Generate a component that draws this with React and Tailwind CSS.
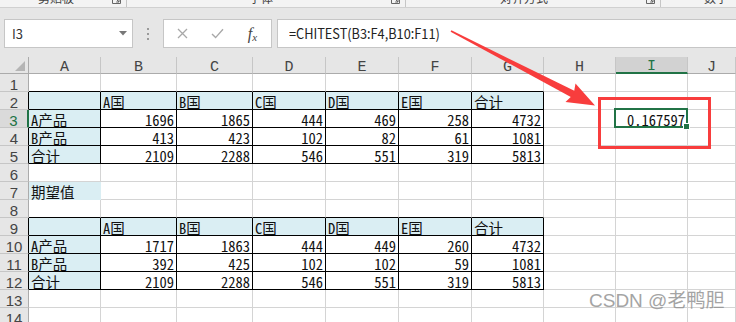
import React from 'react';

const CJK = "font-['Noto_Sans_CJK_SC',sans-serif]";
const CELLFONT = "font-['Noto_Sans_Mono_CJK_SC','Liberation_Mono','Noto_Sans_CJK_SC',monospace]";
const HEADFONT = "font-['Liberation_Mono',monospace]";
const ROWFONT = "font-['Liberation_Sans',sans-serif]";

const colLetters = ['A', 'B', 'C', 'D', 'E', 'F', 'G', 'H', 'I', 'J'];

const t1 = [
  [null, 'A国', 'B国', 'C国', 'D国', 'E国', '合计'],
  ['A产品', 1696, 1865, 444, 469, 258, 4732],
  ['B产品', 413, 423, 102, 82, 61, 1081],
  ['合计', 2109, 2288, 546, 551, 319, 5813],
];
const t2 = [
  [null, 'A国', 'B国', 'C国', 'D国', 'E国', '合计'],
  ['A产品', 1717, 1863, 444, 449, 260, 4732],
  ['B产品', 392, 425, 102, 102, 59, 1081],
  ['合计', 2109, 2288, 546, 551, 319, 5813],
];

function getValue(r, c) {
  if (r >= 2 && r <= 5 && c <= 6) return t1[r - 2][c];
  if (r >= 9 && r <= 12 && c <= 6) return t2[r - 9][c];
  if (r === 7 && c === 0) return '期望值';
  if (r === 3 && c === 8) return '0.167597';
  return null;
}
const inTable = (r, c) => c <= 6 && ((r >= 2 && r <= 5) || (r >= 9 && r <= 12));
const tableRow = (r) => (r >= 2 && r <= 5) || (r >= 9 && r <= 12);
const isFill = (r, c) => (inTable(r, c) && (r === 2 || r === 9 || c === 0)) || (r === 7 && c === 0);

function Launcher() {
  return (
    <svg className="ml-auto mr-[5px] -mt-[5px] shrink-0" width="9" height="9" viewBox="0 0 9 9">
      <path d="M0.5 3V8.5H8.5V3M3 3L7 7M7 4.2V7H4.2" fill="none" stroke="#666" strokeWidth="1" />
    </svg>
  );
}

function Ribbon() {
  const groups = [
    { w: 'w-[127px]', label: '剪贴板', ml: 'ml-[38px]' },
    { w: 'w-[279px]', label: '字体', ml: 'ml-[122px]' },
    { w: 'w-[255px]', label: '对齐方式', ml: 'ml-[94px]' },
    { w: 'flex-1', label: '数字', ml: 'ml-[43px]', last: true },
  ];
  return (
    <div className="flex h-[8px] bg-[#f3f3f3] border-b border-[#d0d0d0] overflow-hidden">
      {groups.map((g) => (
        <div key={g.label} className={`${g.w} flex h-full ${g.last ? '' : 'border-r border-[#c6c6c6]'}`}>
          <span className={`${g.ml} -mt-[8px] ${CJK} text-[12px] leading-[12px] text-[#444] whitespace-nowrap`}>{g.label}</span>
          {!g.last && <Launcher />}
        </div>
      ))}
    </div>
  );
}

function FormulaBar() {
  return (
    <div className="flex h-[49px] bg-[#e6e6e6] pt-[11px] pl-[4px]">
      <div className="flex items-center w-[129px] h-[29px] bg-white border border-[#c6c6c6] pl-[7px] pr-[5px]">
        <span className={`${CJK} text-[13px] text-[#333]`}>I3</span>
        <svg className="ml-auto" width="8" height="5" viewBox="0 0 8 5">
          <path d="M0 0H8L4 4.5Z" fill="#777" />
        </svg>
      </div>
      <div className="w-[30px] h-[29px] flex flex-col items-center justify-center gap-[3px]">
        <span className="w-[2px] h-[2px] bg-[#9a9a9a]" />
        <span className="w-[2px] h-[2px] bg-[#9a9a9a]" />
        <span className="w-[2px] h-[2px] bg-[#9a9a9a]" />
      </div>
      <div className="flex w-[109px] h-[29px] bg-white border border-[#c6c6c6]">
        <div className="w-[36px] flex items-center justify-center">
          <svg width="11" height="11" viewBox="0 0 11 11">
            <path d="M1 1L10 10M10 1L1 10" stroke="#a8a8a8" strokeWidth="1.3" fill="none" />
          </svg>
        </div>
        <div className="w-[34px] flex items-center justify-center">
          <svg width="13" height="11" viewBox="0 0 13 11">
            <path d="M1 6L4.6 9.6L12 1.2" stroke="#a8a8a8" strokeWidth="1.4" fill="none" />
          </svg>
        </div>
        <div className="w-[37px] flex items-center justify-center">
          <span className="font-['Liberation_Serif',serif] italic text-[16px] leading-none text-[#444]">
            f<span className="text-[11px] relative top-[2px]">x</span>
          </span>
        </div>
      </div>
      <div className="ml-[5px] flex-1 h-[29px] bg-white border border-r-0 border-[#c6c6c6] flex items-center pl-[11px]">
        <span className={`${CJK} inline-block origin-left scale-x-[0.91] text-[14px] text-[#222] whitespace-nowrap`}>
          =CHITEST(B3:F4,B10:F11)
        </span>
      </div>
    </div>
  );
}

function Corner() {
  return (
    <div className="h-[17px] bg-[#e6e6e6] border-r border-b border-[#ababab]">
      <svg width="28" height="16" viewBox="0 0 28 16">
        <path d="M15 14H25V4Z" fill="#b5b5b5" />
      </svg>
    </div>
  );
}

function ColHeader({ l }) {
  const sel = l === 'I';
  return (
    <div
      className={`h-[17px] flex items-end justify-center border-r border-r-[#c6c6c6] ${
        sel ? 'bg-[#d2d2d2] border-b-2 border-b-[#217346] text-[#217346]' : 'bg-[#e6e6e6] border-b border-b-[#ababab] text-[#444]'
      }`}
    >
      <span className={`${HEADFONT} text-[15px] leading-[10px]`}>{l}</span>
    </div>
  );
}

function RowHeader({ r }) {
  const sel = r === 3;
  return (
    <div
      className={`h-[18px] flex items-end justify-center border-b border-b-[#c6c6c6] ${
        sel
          ? 'bg-[#dadada] border-r-2 border-r-[#217346] text-[#217346]'
          : `bg-[#e6e6e6] border-r ${tableRow(r) ? 'border-r-black' : 'border-r-[#ababab]'} text-[#444]`
      }`}
    >
      <span className={`${ROWFONT} text-[15px] leading-[12px]`}>{r}</span>
    </div>
  );
}

function Cell({ r, c }) {
  const v = getValue(r, c);
  const fill = isFill(r, c);
  const tbl = inTable(r, c);
  const bB = tbl || ((r === 1 || r === 8) && c <= 6);
  const blueEdge = r === 7 && c === 0;
  const numeric = typeof v === 'number' || (r === 3 && c === 8);
  const cls = [
    'relative h-[18px] flex items-end border-r border-b',
    fill ? 'bg-[#daeef3]' : 'bg-white',
    tbl ? 'border-r-black' : blueEdge ? 'border-r-[#daeef3]' : 'border-r-[#d4d4d4]',
    bB ? 'border-b-black' : blueEdge ? 'border-b-[#daeef3]' : 'border-b-[#d4d4d4]',
    numeric ? 'justify-end pr-[2px]' : 'pl-[2px]',
  ].join(' ');
  return (
    <div className={cls}>
      {v !== null && (
        <span className={`${CELLFONT} text-[14.5px] leading-[14px] text-[#111] whitespace-nowrap`}>{v}</span>
      )}
      {r === 3 && c === 8 && (
        <>
          <div className="absolute left-[-2px] top-[-2px] right-[-1px] bottom-[-1px] border-2 border-[#217346] z-10" />
          <div className="absolute right-[-3px] bottom-[-3px] w-[7px] h-[7px] bg-[#217346] border border-white z-20" />
        </>
      )}
    </div>
  );
}

export default function App() {
  const rows = Array.from({ length: 14 }, (_, i) => i + 1);
  return (
    <div className="relative w-[736px] h-[322px] overflow-hidden bg-white">
      <Ribbon />
      <FormulaBar />
      <div className="grid grid-cols-[29px_72px_76px_76px_73px_73px_73px_72px_72px_72px_1fr]">
        <Corner />
        {colLetters.map((l) => (
          <ColHeader key={l} l={l} />
        ))}
        {rows.map((r) => (
          <React.Fragment key={r}>
            <RowHeader r={r} />
            {colLetters.map((_, c) => (
              <Cell key={c} r={r} c={c} />
            ))}
          </React.Fragment>
        ))}
      </div>

      {/* red annotation box */}
      <div className="absolute left-[598px] top-[97px] w-[113px] h-[52px] border-[3px] border-[#f83d3d] z-30" />

      {/* red arrow */}
      <svg className="absolute left-0 top-0 z-30 pointer-events-none" width="736" height="322" viewBox="0 0 736 322">
        <polygon points="451.4,30.3 577.9,92.6 575.4,99.4 450.6,31.7" fill="#f83d3d" />
        <polygon points="595,105.5 575.5,83.5 573.6,94.2 565.5,102" fill="#f83d3d" />
      </svg>

      {/* watermark */}
      <div className="absolute left-[589px] top-[289px] z-30 font-['Liberation_Sans','Noto_Sans_CJK_SC',sans-serif] text-[19px] leading-[24px] text-[#8e8e8e] opacity-80 whitespace-nowrap">
        CSDN @老鸭胆
      </div>
    </div>
  );
}
